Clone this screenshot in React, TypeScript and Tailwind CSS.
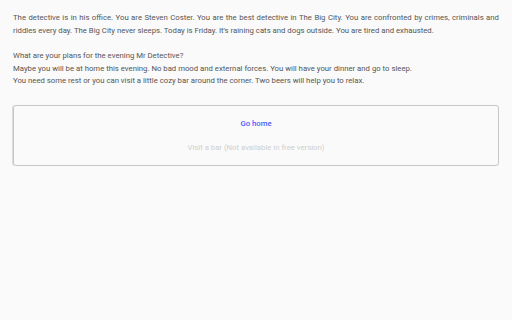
import React from "react";

const App = () => {
  return (
    <div className="min-h-[320px] w-[512px] bg-[#fafafa] px-[13px] pt-[12px] font-['Roboto',sans-serif] text-[7.75px] leading-[12.5px] text-[#555]">
      <p className="text-justify">
        The detective is in his office. You are Steven Coster. You are the best detective in The Big City. You are
        confronted by crimes, criminals and riddles every day. The Big City never sleeps. Today is Friday. It's raining
        cats and dogs outside. You are tired and exhausted.
      </p>
      <div className="mt-[13px]">
        <p>What are your plans for the evening Mr Detective?</p>
        <p>Maybe you will be at home this evening. No bad mood and external forces. You will have your dinner and go to sleep.</p>
        <p>You need some rest or you can visit a little cozy bar around the corner. Two beers will help you to relax.</p>
      </div>
      <div className="mt-[17px] flex h-[61px] flex-col items-center gap-[11.5px] rounded-[3px] border border-[#c6c6c6] pt-[12.5px] shadow-[-1px_0_0_#dcdcdc]">
        <button className="font-medium text-[#4a5cff]">Go home</button>
        <button className="text-[#cfcfcf]" disabled>
          Visit a bar (Not available in free version)
        </button>
      </div>
    </div>
  );
};

export default App;
